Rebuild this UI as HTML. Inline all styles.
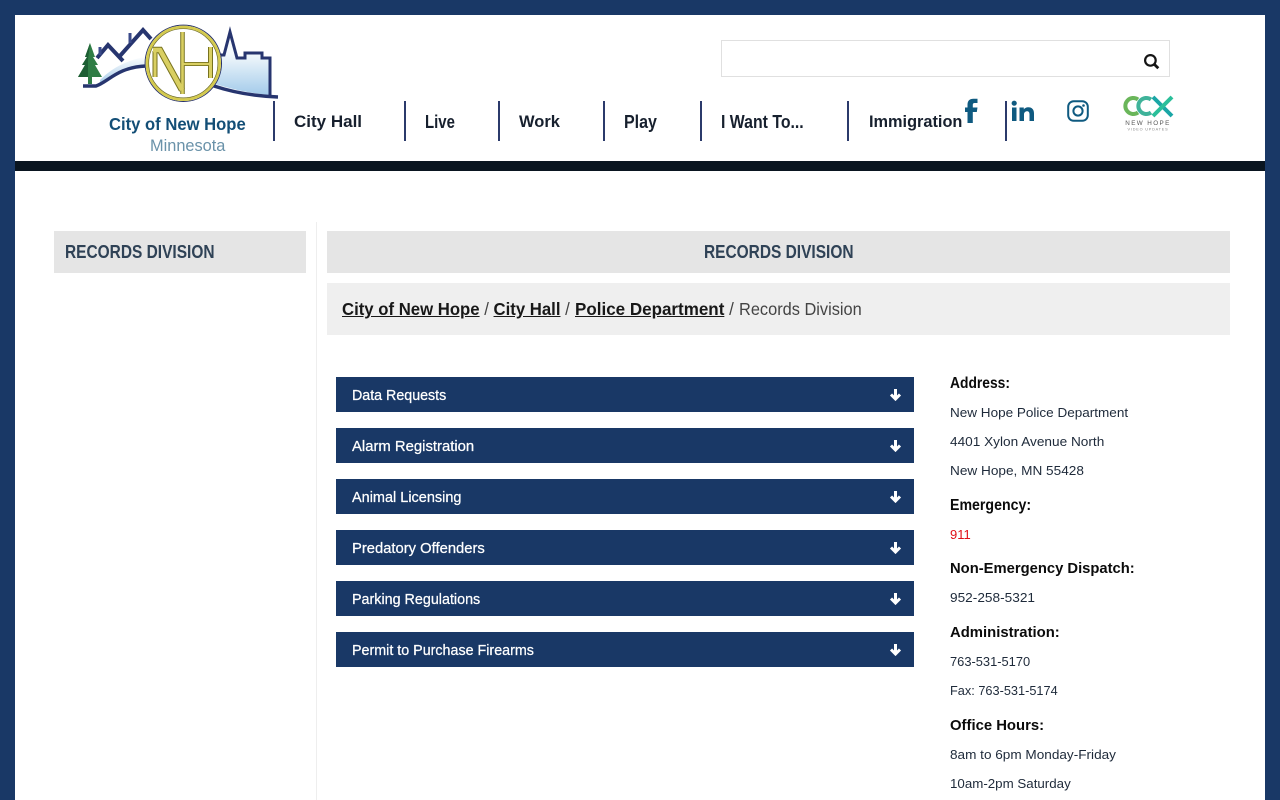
<!DOCTYPE html>
<html lang="en">
<head>
<meta charset="utf-8">
<title>Records Division - City of New Hope</title>
<style>
html,body{margin:0;padding:0;width:1280px;height:800px;overflow:hidden;background:#fff;font-family:"Liberation Sans",sans-serif}
.t{position:absolute;white-space:nowrap;transform-origin:0 50%}
.b{position:absolute}
.sep{position:absolute;top:101px;width:2px;height:40px;background:#2b3a6b}
.nav{position:absolute;top:111px;line-height:22px;font-size:17px;font-weight:bold;color:#17202e;white-space:nowrap;transform-origin:0 50%}
.acc{position:absolute;left:336px;width:578px;height:35px;background:#193866}
.acc span{position:absolute;left:16px;top:0;line-height:37px;font-size:15px;color:#fff;white-space:nowrap;transform-origin:0 50%;-webkit-text-stroke:.25px #fff}
.acc svg{position:absolute;left:553px;top:11px}
.h{position:absolute;left:950px;font-size:15px;font-weight:bold;color:#0b0b0b;line-height:20px;white-space:nowrap;transform-origin:0 50%}
.p{position:absolute;left:950px;font-size:13px;color:#1e2a3a;line-height:18px;white-space:nowrap;transform-origin:0 50%}
u{font-weight:bold;color:#181818}
</style>
</head>
<body>
<div class="b" style="left:0;top:0;width:1280px;height:15px;background:#193866"></div>
<div class="b" style="left:0;top:0;width:15px;height:800px;background:#193866"></div>
<div class="b" style="left:1265px;top:0;width:15px;height:800px;background:#193866"></div>
<div class="b" style="left:15px;top:161px;width:1250px;height:10px;background:#0a1520"></div>

<svg class="b" style="left:0;top:0" width="300" height="110" viewBox="0 0 300 110">
<defs>
<linearGradient id="g" x1="0" y1="0" x2="0" y2="1"><stop offset="0" stop-color="#ffffff"/><stop offset="1" stop-color="#a9cdea"/></linearGradient>
<linearGradient id="g2" x1="0" y1="0" x2="0" y2="1"><stop offset="0" stop-color="#ffffff"/><stop offset=".35" stop-color="#f2f8fc"/><stop offset="1" stop-color="#a3cbea"/></linearGradient>
</defs>
<path d="M100 80C112 68 126 60 150 56V66C126 66 114 72 100 84Z" fill="url(#g)"/>
<path d="M215 56H223L230 32L237 58H245V53H262V58H270V95C248 93 232 89 215 84Z" fill="url(#g2)"/>
<path d="M83 86H96C108 82 118 67 146 66" fill="none" stroke="#27356f" stroke-width="3.400"/>
<path d="M97 58L108 45L123 61M119 57L143 30L151 39" fill="none" stroke="#27356f" stroke-width="4"/>
<path d="M100 47V55M130 33V43" stroke="#3a4a8a" stroke-width="3" fill="none"/>
<path d="M220 55H224L230 32L237 58H245V53H262V58H270V96" fill="none" stroke="#27356f" stroke-width="3"/>
<path d="M214 86C232 92 252 96 278 97" fill="none" stroke="#27356f" stroke-width="3.400"/>
<path d="M90 43L95 57H93L98 65H95L102 77H92V84H88V77H78L85 65H82L87 57H85Z" fill="#2f7d45"/>
<path d="M90 43L85 57H87L82 65H85L78 77H88V60Z" fill="#1d5e33"/>
<circle cx="183.300" cy="63.300" r="38.200" fill="#fff" stroke="#26306a" stroke-width="1"/>
<circle cx="183.300" cy="63.300" r="36.300" fill="none" stroke="#d4ca4e" stroke-width="2.800"/>
<circle cx="183.300" cy="63.300" r="34.600" fill="none" stroke="#6d6a20" stroke-width=".7"/>
<g fill="none" stroke="#77721f">
<path d="M155 51V77" stroke-width="5"/><path d="M153 50H160L182 90" stroke-width="6.500"/><path d="M182.500 32V94" stroke-width="4.500"/><path d="M183 64H211" stroke-width="4"/><path d="M210.500 47V78" stroke-width="5"/>
</g>
<g fill="none" stroke="#d9cf62">
<path d="M155 51V77" stroke-width="3"/><path d="M153 50H160L182 90" stroke-width="4.500"/><path d="M182.500 32V94" stroke-width="2.600"/><path d="M183 64H211" stroke-width="2.200"/><path d="M210.500 47V78" stroke-width="3"/>
</g>
</svg>
<div class="t" style="left:109px;top:113px;line-height:22px;font-size:17.500px;font-weight:bold;color:#134e76;transform:scaleX(.95)">City of New Hope</div>
<div class="t" style="left:150px;top:135px;line-height:22px;font-size:16.500px;color:#6a92a9;transform:scaleX(.99)">Minnesota</div>

<div class="b" style="left:721px;top:40px;width:447px;height:35px;border:1px solid #e0e0e0"></div>
<svg class="b" style="left:1143px;top:53px" width="17" height="17" viewBox="0 0 17 17"><circle cx="7.400" cy="7.400" r="5.300" fill="none" stroke="#151515" stroke-width="2.200"/><path d="M11.500 11.500L15.300 15.300" stroke="#151515" stroke-width="2.800"/></svg>

<div class="sep" style="left:273px"></div>
<div class="sep" style="left:404px"></div>
<div class="sep" style="left:498px"></div>
<div class="sep" style="left:603px"></div>
<div class="sep" style="left:700px"></div>
<div class="sep" style="left:847px"></div>
<div class="sep" style="left:1005px"></div>
<div class="nav" style="left:294px">City Hall</div>
<div class="nav" style="left:425px;font-size:18px;transform:scaleX(.83)">Live</div>
<div class="nav" style="left:519px;transform:scaleX(.97)">Work</div>
<div class="nav" style="left:624px;font-size:18px;transform:scaleX(.89)">Play</div>
<div class="nav" style="left:721px;font-size:18px;transform:scaleX(.88)">I Want To...</div>
<div class="nav" style="left:869px;transform:scaleX(.96)">Immigration</div>

<svg class="b" style="left:964px;top:98px" width="14" height="26" viewBox="0 0 14 26"><path d="M3.500 25V14H1V9.500H3.500V6.500C3.500 3 5.500 .8 9.500 .8H13.500V5H11C9.300 5 8.800 5.700 8.800 7V9.500H13.500L12.800 14H8.800V25Z" fill="#0f5a80"/></svg>
<svg class="b" style="left:1011px;top:100px" width="24" height="22" viewBox="0 0 24 22"><circle cx="3.200" cy="3.200" r="2.600" fill="#0f5a80"/><path d="M1 7.500H5.500V21H1ZM8.500 7.500H12.800V9.400C13.700 8 15.300 7.200 17.200 7.200C21.200 7.200 23 9.600 23 13.500V21H18.500V14.300C18.500 12.400 17.800 11.200 16.200 11.200C14.300 11.200 13 12.400 13 14.500V21H8.500Z" fill="#0f5a80"/></svg>
<svg class="b" style="left:1067px;top:100px" width="22" height="22" viewBox="0 0 22 22"><rect x="1.200" y="1.200" width="19.600" height="19.600" rx="5.500" fill="none" stroke="#0f5a80" stroke-width="2"/><circle cx="11" cy="11" r="4.600" fill="none" stroke="#0f5a80" stroke-width="2"/><circle cx="16.500" cy="5.500" r="1.300" fill="#0f5a80"/></svg>

<svg class="b" style="left:1119px;top:92px" width="56" height="42" viewBox="0 0 56 42">
<path d="M19 7.500A8 8 0 1 0 19 20.500" fill="none" stroke="#6ab65a" stroke-width="4"/>
<path d="M32 7.500A8 8 0 1 0 32 20.500" fill="none" stroke="#3fb39a" stroke-width="4"/>
<path d="M34 5L53 24" stroke="#1aa6a6" stroke-width="4"/>
<path d="M53 5L34 24" stroke="#2abf9a" stroke-width="4"/>
<text x="29" y="33" text-anchor="middle" font-family="Liberation Sans,sans-serif" font-size="6.300" letter-spacing="1.400" fill="#555">NEW HOPE</text>
<text x="29" y="38.500" text-anchor="middle" font-family="Liberation Sans,sans-serif" font-size="3.800" letter-spacing=".8" fill="#888">VIDEO UPDATES</text>
</svg>

<div class="b" style="left:316px;top:222px;width:1px;height:578px;background:#eeeeee"></div>
<div class="b" style="left:54px;top:231px;width:252px;height:42px;background:#e5e5e5"></div>
<div class="t" style="left:65px;top:231px;line-height:42px;font-size:18.500px;font-weight:bold;color:#2f4256;transform:scaleX(.836)">RECORDS DIVISION</div>
<div class="b" style="left:327px;top:231px;width:903px;height:42px;background:#e5e5e5"></div>
<div class="t" style="left:704px;top:231px;line-height:42px;font-size:18.500px;font-weight:bold;color:#2f4256;transform:scaleX(.836)">RECORDS DIVISION</div>
<div class="b" style="left:327px;top:283px;width:903px;height:52px;background:#efefef"></div>
<div class="t" style="left:342px;top:283px;line-height:52px;font-size:17.500px;color:#444;transform:scaleX(.956)"><u>City of New Hope</u> / <u>City Hall</u> /</div>
<div class="t" style="left:575px;top:283px;line-height:52px;font-size:17.500px;color:#444;transform:scaleX(.972)"><u>Police Department</u> /</div>
<div class="t" style="left:739px;top:283px;line-height:52px;font-size:17.500px;color:#444;transform:scaleX(.935)">Records Division</div>

<div class="acc" style="top:377px"><span style="transform:scaleX(.95)">Data Requests</span><svg width="13" height="13" viewBox="0 0 13 13"><path d="M6.500 1V10.500M2 6.500L6.500 11L11 6.500" fill="none" stroke="#fff" stroke-width="3"/></svg></div>
<div class="acc" style="top:428px"><span style="transform:scaleX(.99)">Alarm Registration</span><svg width="13" height="13" viewBox="0 0 13 13"><path d="M6.500 1V10.500M2 6.500L6.500 11L11 6.500" fill="none" stroke="#fff" stroke-width="3"/></svg></div>
<div class="acc" style="top:479px"><span style="transform:scaleX(.965)">Animal Licensing</span><svg width="13" height="13" viewBox="0 0 13 13"><path d="M6.500 1V10.500M2 6.500L6.500 11L11 6.500" fill="none" stroke="#fff" stroke-width="3"/></svg></div>
<div class="acc" style="top:530px"><span style="transform:scaleX(.985)">Predatory Offenders</span><svg width="13" height="13" viewBox="0 0 13 13"><path d="M6.500 1V10.500M2 6.500L6.500 11L11 6.500" fill="none" stroke="#fff" stroke-width="3"/></svg></div>
<div class="acc" style="top:581px"><span style="transform:scaleX(.955)">Parking Regulations</span><svg width="13" height="13" viewBox="0 0 13 13"><path d="M6.500 1V10.500M2 6.500L6.500 11L11 6.500" fill="none" stroke="#fff" stroke-width="3"/></svg></div>
<div class="acc" style="top:632px"><span style="transform:scaleX(.953)">Permit to Purchase Firearms</span><svg width="13" height="13" viewBox="0 0 13 13"><path d="M6.500 1V10.500M2 6.500L6.500 11L11 6.500" fill="none" stroke="#fff" stroke-width="3"/></svg></div>

<div class="h" style="top:374px;font-size:16px;transform:scaleX(.865)">Address:</div>
<div class="p" style="top:404px;transform:scaleX(1.04)">New Hope Police Department</div>
<div class="p" style="top:433px;transform:scaleX(1.048)">4401 Xylon Avenue North</div>
<div class="p" style="top:462px;transform:scaleX(1.047)">New Hope, MN 55428</div>
<div class="h" style="top:496px;font-size:16px;transform:scaleX(.885)">Emergency:</div>
<div class="p" style="top:526px;color:#e01018">911</div>
<div class="h" style="top:559px;transform:scaleX(.985)">Non-Emergency Dispatch:</div>
<div class="p" style="top:589px;transform:scaleX(1.05)">952-258-5321</div>
<div class="h" style="top:623px;transform:scaleX(.99)">Administration:</div>
<div class="p" style="top:653px;transform:scaleX(.99)">763-531-5170</div>
<div class="p" style="top:682px;transform:scaleX(.98)">Fax: 763-531-5174</div>
<div class="h" style="top:716px;transform:scaleX(.99)">Office Hours:</div>
<div class="p" style="top:746px;transform:scaleX(1.044)">8am to 6pm Monday-Friday</div>
<div class="p" style="top:775px;transform:scaleX(1.025)">10am-2pm Saturday</div>
</body>
</html>
